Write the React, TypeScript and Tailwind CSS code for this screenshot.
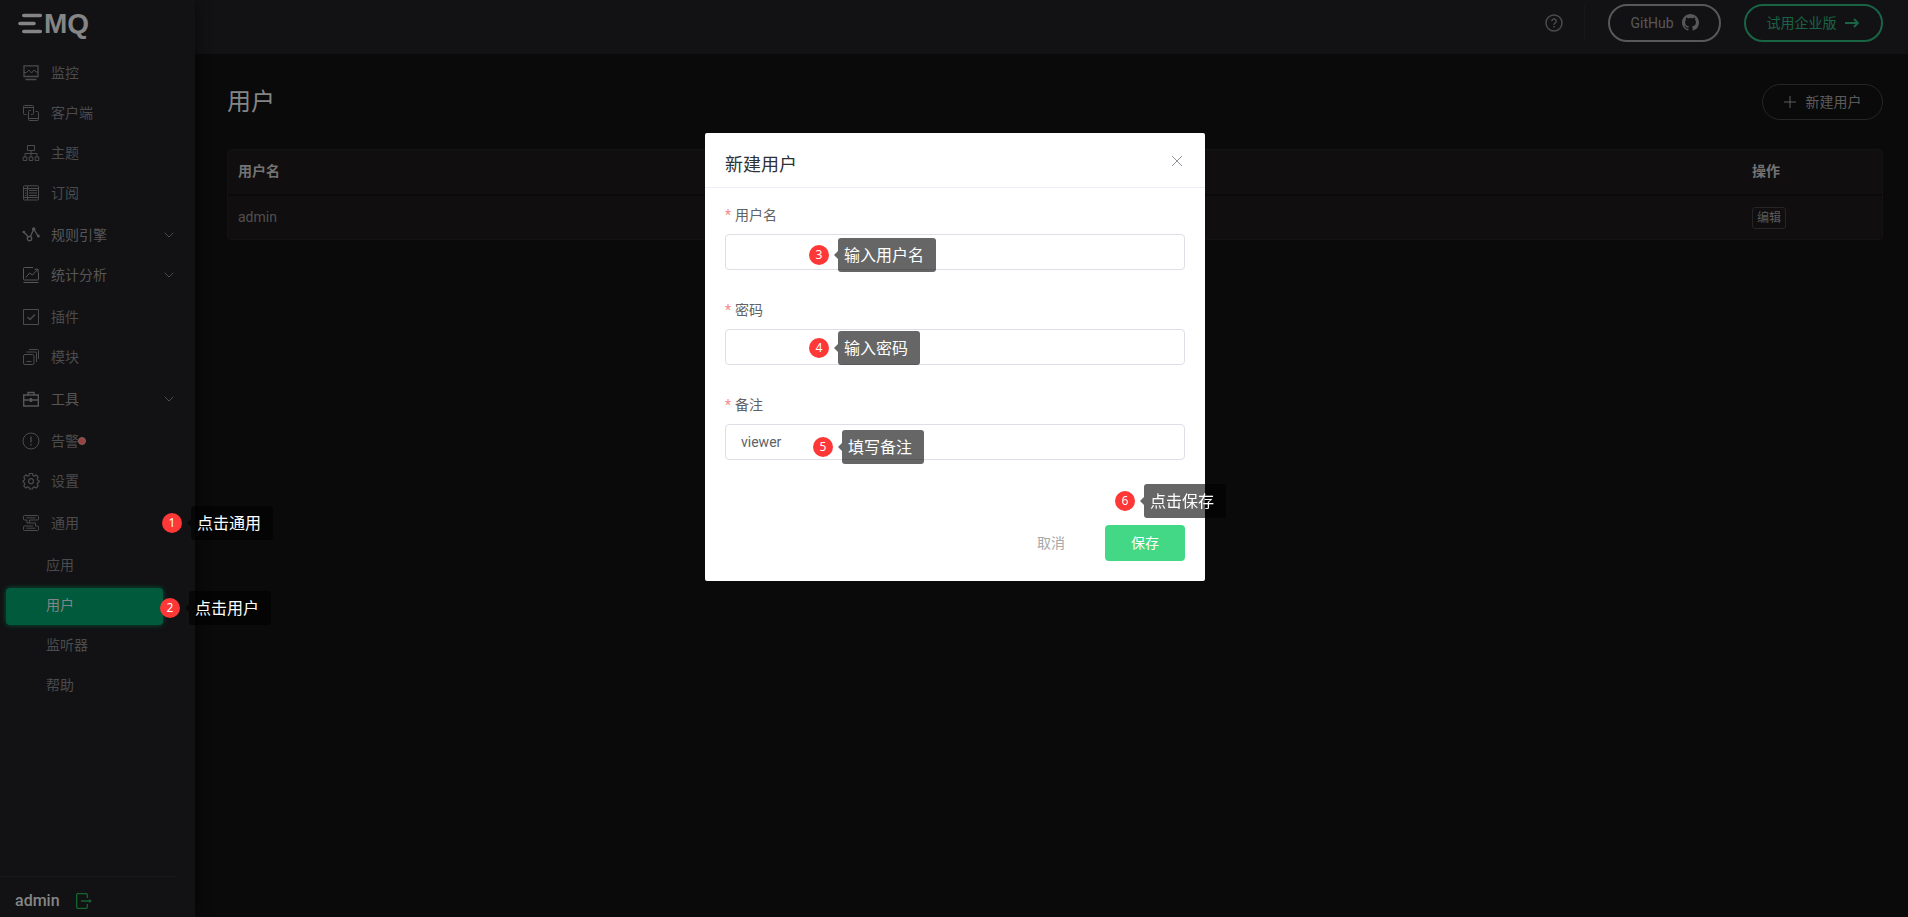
import type { ReactNode } from "react";
import { useState } from "react";

type MenuItem = {
  label: string;
  icon?: ReactNode;
  expandable?: boolean;
  bright?: boolean;
  dot?: boolean;
};

function Icon({ children }: { children: ReactNode }) {
  return (
    <svg
      viewBox="0 0 16 16"
      className="size-4 shrink-0 overflow-visible"
      fill="none"
      stroke="currentColor"
      strokeWidth="1"
      aria-hidden="true"
    >
      {children}
    </svg>
  );
}

const menuGroups: MenuItem[][] = [
  [
    {
      label: "监控",
      icon: (
        <Icon>
          <path d="M1 .8h14v10.700H1zM2.500 14.500h11" strokeWidth="1.300" />
          <path d="M1 7.500h2.500L6 5l2.500 3L11 5l2 2h2" />
        </Icon>
      ),
    },
    {
      label: "客户端",
      icon: (
        <Icon>
          <path d="M3.500 9.500H1.500a1 1 0 0 1-1-1v-7a1 1 0 0 1 1-1h8a1 1 0 0 1 1 1v7a1 1 0 0 1-1 1H8M.5 2.500h10" />
          <path d="M8 5.500H6.500a1 1 0 0 0-1 1v8a1 1 0 0 0 1 1h8a1 1 0 0 0 1-1v-7a1 1 0 0 0-1-1h-2M5.500 13.500h10" />
        </Icon>
      ),
    },
    {
      label: "主题",
      icon: (
        <Icon>
          <path d="M4.500.5h7v5h-7zM8 5.500V12M2 12V8.500h12V12" />
          <path d="M.2 12h3.600v3.500H.2zM6.200 12h3.600v3.500H6.200zM12.200 12h3.600v3.500h-3.600z" />
        </Icon>
      ),
    },
    {
      label: "订阅",
      icon: (
        <Icon>
          <rect x=".5" y=".8" width="15" height="14.200" rx="1" />
          <path d="M.5 3.500h15M.5 12.500h15M4.500 1v14" />
          <path d="M6 5.500h8M6 8h8M6 10.500h8M2 5.500h1.500M2 8h1.500M2 10.500h1.500" />
        </Icon>
      ),
    },
  ],
  [
    {
      label: "规则引擎",
      expandable: true,
      bright: true,
      icon: (
        <Icon>
          <path d="M.8 5 5.500 10M7.500 9.500 10.500 2.500M11 2.500l4 6.500" strokeWidth="1.300" />
          <circle cx="6.500" cy="11.500" r="2.200" strokeWidth="1.300" />
          <circle cx=".8" cy="5" r="1.300" fill="currentColor" stroke="none" />
          <circle cx="10.700" cy="2" r="1.700" fill="currentColor" stroke="none" />
          <circle cx="15.300" cy="9" r="1.500" fill="currentColor" stroke="none" />
        </Icon>
      ),
    },
    {
      label: "统计分析",
      expandable: true,
      bright: true,
      icon: (
        <Icon>
          <path d="M10 .5H1.500a1 1 0 0 0-1 1v10.500a1 1 0 0 0 1 1h13a1 1 0 0 0 1-1V5.500M.5 15.500h15" />
          <path d="M3 10.500 6.500 6l3 2L14.500 2.500M11.500 2.200h3.500v3.300" />
        </Icon>
      ),
    },
  ],
  [
    {
      label: "插件",
      icon: (
        <Icon>
          <path d="M.5.5h15v15H.5z" />
          <path d="m4.500 8 2.500 2.500L12 5.500" strokeWidth="1.500" />
        </Icon>
      ),
    },
    {
      label: "模块",
      icon: (
        <Icon>
          <rect x=".5" y="5.500" width="10.500" height="10" rx="1.500" />
          <path d="M3.500 12.500h5M3.500 3h9a1 1 0 0 1 1 1v9M6 .5h8.500a1 1 0 0 1 1 1V10" />
        </Icon>
      ),
    },
  ],
  [
    {
      label: "工具",
      expandable: true,
      bright: true,
      icon: (
        <Icon>
          <path d="M.7 4h14.600v11H.7zM5 4V1.500h6V4M.7 9h14.600" strokeWidth="1.400" />
          <path d="M8 7v4" strokeWidth="2.500" />
        </Icon>
      ),
    },
  ],
  [
    {
      label: "告警",
      dot: true,
      icon: (
        <Icon>
          <circle cx="8" cy="8" r="8" />
          <path d="M8 3.500v6M8 11v1.500" strokeWidth="1.300" />
        </Icon>
      ),
    },
    {
      label: "设置",
      icon: (
        <Icon>
          <path
            d="M6.500.5h3l.5 2 1.300.6 1.900-1 2 2-1 1.900.6 1.300 1.200.4v1.600l-1.200.4-.6 1.500 1 1.700-2 2-1.900-1-1.300.5-.5 1.600h-3L6 14.400l-1.300-.5-1.900 1-2-2 1-1.700-.6-1.500L.2 9.200V7.600l1-.4.6-1.300-1-1.900 2-2 1.900 1L6 2.500z"
            strokeWidth="1.200"
          />
          <circle cx="8" cy="8.200" r="2.500" strokeWidth="1.200" />
        </Icon>
      ),
    },
  ],
  [
    {
      label: "通用",
      icon: (
        <Icon>
          <path d="M4 5H1.500a1 1 0 0 1-1-1V1.500a1 1 0 0 1 1-1h13a1 1 0 0 1 1 1V4a1 1 0 0 1-1 1H6.500v3h6v3h2a1 1 0 0 1 1 1v2.500a1 1 0 0 1-1 1h-13a1 1 0 0 1-1-1V12a1 1 0 0 1 1-1H10" />
          <path d="M4 5v3h2.500M3.500 2.800h9M3.500 13.200h9" />
        </Icon>
      ),
    },
  ],
];

const subMenu = ["应用", "用户", "监听器", "帮助"];

// Numbered step marker with its hint bubble
function Step({ n, text, className }: { n: number; text: string; className: string }) {
  return (
    <div className={`pointer-events-none absolute z-20 flex items-center whitespace-nowrap ${className}`}>
      <span className="flex size-5 items-center justify-center rounded-full bg-[#fe3737] font-['Noto_Sans'] text-xs text-white">
        {n}
      </span>
      <span className="ml-[5px] h-0 w-0 border-y-4 border-r-4 border-y-transparent border-r-black/60" />
      <span className="h-[34px] rounded-[3px] bg-black/60 pr-3 pl-1.5 text-base leading-9 text-white">
        {text}
      </span>
    </div>
  );
}

function Chevron() {
  return (
    <svg viewBox="0 0 10 6" className="mr-[21px] ml-auto h-1.5 w-2.5" fill="none" stroke="#4a4a4c" aria-hidden="true">
      <path d="m.7.7 4.300 4.300L9.300.7" />
    </svg>
  );
}

function Sidebar() {
  return (
    <aside className="relative z-10 flex min-h-screen w-[195px] shrink-0 flex-col bg-[#121214] shadow-[4px_0_12px_rgba(0,0,0,0.35)]">
      <a href="#" aria-label="EMQ" className="flex h-[53px] items-start pt-[10px] pl-[18px] text-[#858586]">
        <svg viewBox="0 0 26 28" className="h-7 w-[26px]" stroke="currentColor" strokeWidth="3.600" strokeLinecap="round" aria-hidden="true">
          <path d="M5.800 5.500h16.500M2 13.500h14M5.800 21.500h16.500" />
        </svg>
        <span className="font-['Liberation_Sans',sans-serif] text-[28px] leading-7 font-bold">MQ</span>
      </a>

      <nav className="flex flex-col gap-0.5 text-sm text-[#4b4b4d]">
        {menuGroups.map((group) => (
          <ul key={group[0].label}>
            {group.map((item) => (
              <li key={item.label} className="relative">
                <a
                  href="#"
                  className={`flex h-10 items-center pl-[23px] ${item.bright ? "text-[#565658]" : ""}`}
                >
                  {item.icon}
                  <span className="ml-3">{item.label}</span>
                  {item.dot && (
                    <span className="-ml-px size-2 rounded-full border border-[#7c6060] bg-[#9c4040]" />
                  )}
                  {item.expandable && <Chevron />}
                </a>
                {item.label === "通用" && <Step n={1} text="点击通用" className="top-[3px] left-[162px]" />}
              </li>
            ))}
          </ul>
        ))}
        <ul>
          {subMenu.map((label) => (
            <li key={label} className="relative h-10">
              {label === "用户" ? (
                <>
                  <a
                    href="#"
                    aria-current="page"
                    className="mr-8 ml-1.5 flex h-full items-center pl-10 text-[#858585]"
                  >
                    <span className="absolute top-[3px] right-8 bottom-0 left-1.5 rounded bg-[#005a3b] shadow-[0_0_5px_#005a3b]" />
                    <span className="relative">{label}</span>
                  </a>
                  <Step n={2} text="点击用户" className="top-1.5 left-40" />
                </>
              ) : (
                <a href="#" className="flex h-full items-center pl-[46px]">
                  {label}
                </a>
              )}
            </li>
          ))}
        </ul>
      </nav>

      <div className="mt-auto mr-5 flex h-[41px] items-center border-t border-[#19191b] pt-2 pl-[15px]">
        <span className="text-base font-medium text-[#858586]">admin</span>
        <button type="button" aria-label="退出" className="ml-4 text-[#14662f]">
          <svg viewBox="0 0 16 16" className="size-4" fill="none" stroke="currentColor" strokeWidth="1.300">
            <path d="M11.300 5V1.700a1 1 0 0 0-1-1H1.700a1 1 0 0 0-1 1v12.600a1 1 0 0 0 1 1h8.600a1 1 0 0 0 1-1V11M5 8h9" />
            <path d="m13 6 3 2-3 2z" fill="currentColor" stroke="none" />
          </svg>
        </button>
      </div>
    </aside>
  );
}

function Header() {
  return (
    <header className="flex h-[54px] items-start justify-end bg-[#121214] pt-1 pr-[25px] text-sm">
      <div className="flex h-[38px] items-center">
        <button type="button" aria-label="帮助" className="text-[#4b4b4d]">
          <svg viewBox="0 0 18 18" className="size-[18px]" fill="none" stroke="currentColor" strokeWidth="1.500">
            <circle cx="9" cy="9" r="8" />
            <path d="M6.800 7.200a2.200 2.200 0 1 1 3.300 1.900c-.8.400-1.100.8-1.100 1.600M9 12v1.400" />
          </svg>
        </button>
        <span className="mr-[23px] ml-[21px] h-[34px] w-px bg-[#18181a]" />
        <a
          href="#"
          className="flex h-full w-[113px] items-center justify-center gap-2 rounded-full border-2 border-[#58585a] text-[#58585a]"
        >
          GitHub
          <svg viewBox="0 0 16 16" className="mb-0.5 size-[17px]" fill="currentColor" aria-hidden="true">
            <path d="M8 0C3.580 0 0 3.580 0 8c0 3.540 2.290 6.530 5.470 7.590.4.070.55-.17.55-.38 0-.19-.01-.82-.01-1.490-2.010.37-2.530-.49-2.690-.94-.09-.23-.48-.94-.82-1.130-.28-.15-.68-.52-.01-.53.63-.01 1.080.58 1.230.82.72 1.210 1.870.87 2.330.66.07-.52.28-.87.51-1.070-1.780-.2-3.640-.89-3.640-3.950 0-.87.31-1.590.82-2.150-.08-.2-.36-1.020.08-2.120 0 0 .67-.21 2.200.82.64-.18 1.320-.27 2-.27s1.360.09 2 .27c1.530-1.040 2.200-.82 2.200-.82.44 1.100.16 1.920.08 2.120.51.56.82 1.270.82 2.150 0 3.070-1.870 3.750-3.650 3.950.29.25.54.73.54 1.480 0 1.070-.01 1.930-.01 2.200 0 .21.15.46.55.38A8.010 8.010 0 0 0 16 8c0-4.420-3.580-8-8-8z" />
          </svg>
        </a>
        <a
          href="#"
          className="ml-[23px] flex h-full w-[139px] items-center justify-center gap-2 rounded-full border-2 border-[#1a6446] pr-0.5 text-[#1a6446]"
        >
          试用企业版
          <svg viewBox="0 0 14 10" className="h-2.5 w-3.5" fill="none" stroke="currentColor" strokeWidth="1.800" aria-hidden="true">
            <path d="M0 5h12.500M9 1l4 4-4 4" />
          </svg>
        </a>
      </div>
    </header>
  );
}

function UsersPage() {
  return (
    <main className="pt-[30px] pr-[25px] pl-8">
      <div className="flex h-9 items-center justify-between">
        <h1 className="text-2xl text-[#858585]">用户</h1>
        <button
          type="button"
          className="flex h-9 w-[121px] items-center justify-center gap-2.5 rounded-full border border-[#262626] text-sm text-[#5c5c5c]"
        >
          <svg viewBox="0 0 12 12" className="size-3" stroke="currentColor" aria-hidden="true">
            <path d="M6 0v12M0 6h12" />
          </svg>
          新建用户
        </button>
      </div>

      <div className="mt-[29px] rounded border border-[#141314] bg-[#100e0f]">
        <table className="w-full table-fixed text-left text-sm">
          <thead>
            <tr className="h-[45px] border-b-2 border-[#0a0a0a] text-[#737373]">
              <th className="pb-0.5 pl-2.5 font-bold">用户名</th>
              <th className="w-[140px] pb-0.5 pl-2.5 font-bold">操作</th>
            </tr>
          </thead>
          <tbody>
            <tr className="h-11 text-[#505050]">
              <td className="pb-0.5 pl-2.5">admin</td>
              <td className="pl-2.5">
                <button
                  type="button"
                  className="flex h-[22px] items-center rounded-[3px] border border-[#262526] px-1 text-xs text-[#5c5c5c]"
                >
                  编辑
                </button>
              </td>
            </tr>
          </tbody>
        </table>
      </div>
    </main>
  );
}

function Field({
  id,
  label,
  type = "text",
  value,
  onChange,
  children,
}: {
  id: string;
  label: string;
  type?: string;
  value: string;
  onChange: (value: string) => void;
  children: ReactNode;
}) {
  return (
    <div>
      <label htmlFor={id} className="flex h-[38px] items-center gap-1 text-sm text-[#606266]">
        <span className="text-[#f78989]">*</span>
        {label}
      </label>
      <div className="relative">
        <input
          id={id}
          type={type}
          value={value}
          onChange={(e) => onChange(e.target.value)}
          className="block h-9 w-full rounded border border-[#dcdfe6] bg-white px-[15px] text-sm text-[#606266] outline-none"
        />
        {children}
      </div>
    </div>
  );
}

function NewUserDialog() {
  const [username, setUsername] = useState("");
  const [password, setPassword] = useState("");
  const [remark, setRemark] = useState("viewer");

  return (
    <div className="fixed inset-0 z-30 flex items-start justify-center pt-[133px] pl-0.5">
      <div role="dialog" aria-labelledby="dialog-title" className="w-[500px] rounded-[2px] bg-white">
        <div className="flex h-[55px] items-center justify-between border-b border-[#ebeef5] px-5">
          <h2 id="dialog-title" className="pt-2.5 text-lg text-[#303133]">
            新建用户
          </h2>
          <button type="button" aria-label="关闭" className="mt-0.5 mr-[3px] text-[#909399]">
            <svg viewBox="0 0 10 10" className="size-2.5" stroke="currentColor">
              <path d="m0 0 10 10M10 0 0 10" />
            </svg>
          </button>
        </div>

        <form className="px-5 pt-2 pb-5" onSubmit={(e) => e.preventDefault()}>
          <div className="flex flex-col gap-[21px]">
            <Field id="username" label="用户名" value={username} onChange={setUsername}>
              <Step n={3} text="输入用户名" className="top-1 left-[84px]" />
            </Field>
            <Field id="password" label="密码" type="password" value={password} onChange={setPassword}>
              <Step n={4} text="输入密码" className="top-0.5 left-[84px]" />
            </Field>
            <Field id="remark" label="备注" value={remark} onChange={setRemark}>
              <Step n={5} text="填写备注" className="top-1.5 left-[88px]" />
            </Field>
          </div>

          <div className="mt-[65px] flex justify-end gap-5 text-sm">
            <button type="button" className="h-9 px-5 text-[#a8a8a8]">
              取消
            </button>
            <div className="relative">
              <button type="submit" className="h-9 w-20 rounded bg-[#42d885] text-white">
                保存
              </button>
              <Step n={6} text="点击保存" className="-top-[41px] left-2.5" />
            </div>
          </div>
        </form>
      </div>
    </div>
  );
}

export default function App() {
  return (
    <div className="flex min-h-screen bg-[#0a0a0a] font-['Roboto','Noto_Sans_CJK_SC',sans-serif]">
      <Sidebar />
      <div className="min-w-0 flex-1">
        <Header />
        <UsersPage />
      </div>
      <NewUserDialog />
    </div>
  );
}
